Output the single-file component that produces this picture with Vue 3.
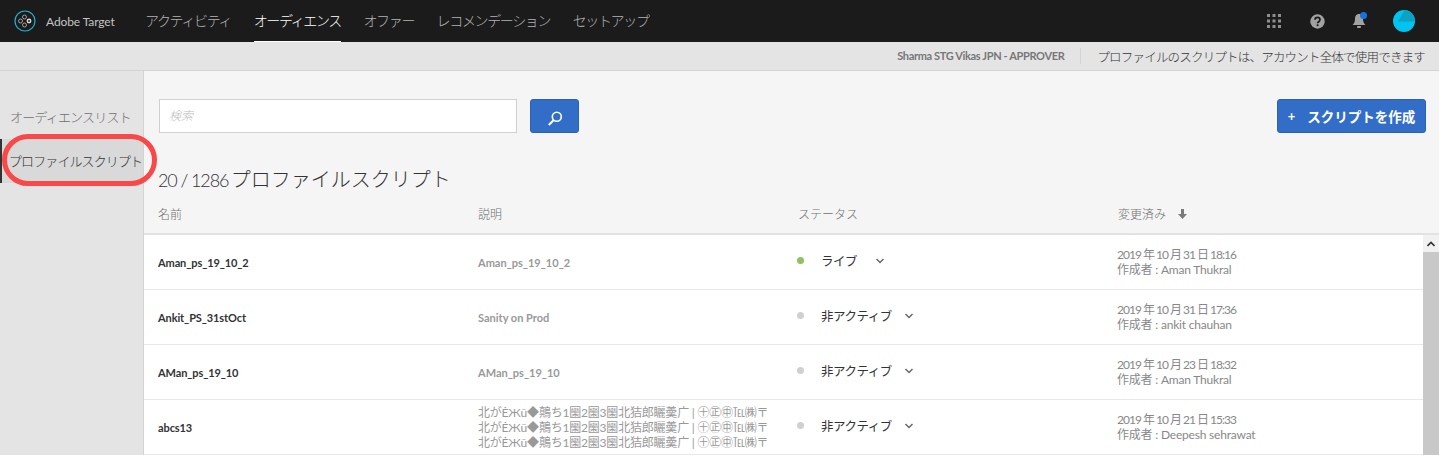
<script setup>
const nav = ['アクティビティ', 'オーディエンス', 'オファー', 'レコメンデーション', 'セットアップ']
const garbled = '北がĖЖū◆鷏ち1圞2圞3圞北狤郎矖羮广 | ㊉㊣㊥℡㈱〒'
const rows = [
  { name: 'Aman_ps_19_10_2', desc: ['Aman_ps_19_10_2'], status: 'ライブ', live: true, date: '2019 年 10 月 31 日 18:16', by: 'Aman Thukral' },
  { name: 'Ankit_PS_31stOct', desc: ['Sanity on Prod'], status: '非アクティブ', date: '2019 年 10 月 31 日 17:36', by: 'ankit chauhan' },
  { name: 'AMan_ps_19_10', desc: ['AMan_ps_19_10'], status: '非アクティブ', date: '2019 年 10 月 23 日 18:32', by: 'Aman Thukral' },
  { name: 'abcs13', desc: [garbled, garbled, garbled], status: '非アクティブ', date: '2019 年 10 月 21 日 15:33', by: 'Deepesh sehrawat' },
]
</script>

<template>
  <div class="page">
    <header class="topbar">
      <div class="brand">
        <svg width="22" height="22" viewBox="0 0 22 22" fill="none">
          <circle cx="11" cy="11" r="10" stroke="#1fb3d6" stroke-width="1.2" />
          <circle cx="6.5" cy="11" r="2" stroke="#bbb" stroke-width=".8" />
          <circle cx="10.5" cy="7" r="2" stroke="#bbb" stroke-width=".8" />
          <circle cx="10.5" cy="15" r="2" stroke="#bbb" stroke-width=".8" />
          <circle cx="15" cy="11" r="2.4" fill="#ddd" />
          <circle cx="15" cy="11" r="1" fill="#1b1b1b" />
        </svg>
        <span>Adobe Target</span>
      </div>
      <nav class="nav">
        <a v-for="(n, i) in nav" :key="n" :class="{ on: i === 1 }">{{ n }}</a>
      </nav>
      <div class="tools">
        <svg class="apps" width="14" height="14" viewBox="0 0 14 14" fill="#8e8e8e">
          <template v-for="y in [0, 5.5, 11]" :key="y">
            <rect v-for="x in [0, 5.5, 11]" :key="x" :x="x" :y="y" width="3" height="3" />
          </template>
        </svg>
        <svg class="help" width="15" height="15" viewBox="0 0 15 15">
          <circle cx="7.5" cy="7.5" r="7.2" fill="#a2a2a2" />
          <path d="M5 5.8c0-3.200 5-3.200 5 0 0 1.900-2.400 1.900-2.400 3.500" fill="none" stroke="#1b1b1b" stroke-width="1.700" />
          <rect x="6.700" y="10.300" width="1.800" height="1.800" fill="#1b1b1b" />
        </svg>
        <svg class="bell" width="15" height="18" viewBox="0 0 15 18">
          <path d="M7 2c-3 0-4 2.500-4 5 0 3-1 4.500-2.300 6h12.600C12 11.500 11 10 11 7c0-2.500-1-5-4-5z" fill="#a2a2a2" />
          <rect x="5.200" y="14" width="3.600" height="2" fill="#a2a2a2" />
          <circle cx="11.500" cy="3.500" r="3.500" fill="#1473e6" />
        </svg>
        <svg class="avatar" width="22" height="22" viewBox="0 0 22 22">
          <circle cx="11" cy="11" r="11" fill="#00c3f0" />
          <path d="M11.500 0L5 11.500H22A11 11 0 0 0 11.500 0z" fill="#0ba2c4" />
        </svg>
      </div>
    </header>

    <div class="subbar">
      <span class="user">Sharma STG Vikas JPN - APPROVER</span>
      <span class="note">プロファイルのスクリプトは、アカウント全体で使用できます</span>
    </div>

    <div class="body">
      <aside class="side">
        <a class="side-item">オーディエンスリスト</a>
        <a class="side-item active">プロファイルスクリプト</a>
      </aside>

      <main class="main">
        <div class="toolbar">
          <div class="search">検索</div>
          <button class="btn search-btn">
            <svg class="lens" width="16" height="16" viewBox="0 0 16 16" fill="none" stroke="#fff" stroke-width="1.600">
              <circle cx="9.800" cy="6.800" r="4.500" />
              <path d="M6.500 10.300L1.800 15" stroke-width="2" />
            </svg>
          </button>
          <button class="btn create"><span class="plus">+</span>スクリプトを作成</button>
        </div>
        <h1 class="count"><span class="num">20 / 1286</span> プロファイルスクリプト</h1>

        <div class="thead">
          <div>名前</div>
          <div>説明</div>
          <div>ステータス</div>
          <div>変更済み
            <svg class="sort" width="9" height="10" viewBox="0 0 9 10" fill="#7b7b7b"><path d="M3 0h3v5h3L4.500 10 0 5h3z" /></svg>
          </div>
        </div>

        <div class="tbody">
          <div class="rows">
            <div v-for="r in rows" :key="r.name" class="row">
              <div class="name">{{ r.name }}</div>
              <div class="desc" :class="{ multi: r.desc.length > 1 }">
                <div v-for="(d, i) in r.desc" :key="i">{{ d }}</div>
              </div>
              <div class="status" :class="{ live: r.live }">
                <i class="dot"></i>
                <span class="label">{{ r.status }}</span>
                <svg class="chev" width="8" height="6" viewBox="0 0 8 6" fill="none" stroke="#666" stroke-width="1.500"><path d="M.5 1L4 4.500 7.500 1" /></svg>
              </div>
              <div class="mod">
                <div class="date">{{ r.date }}</div>
                <div class="by">作成者 : {{ r.by }}</div>
              </div>
            </div>
          </div>
          <div class="scroll">
            <div class="scroll-btn">
              <svg width="8" height="6" viewBox="0 0 8 6" fill="none" stroke="#333" stroke-width="1.600"><path d="M.5 5L4 1.500 7.500 5" /></svg>
            </div>
            <div class="thumb"></div>
          </div>
        </div>
      </main>
    </div>

    <div class="callout"></div>
  </div>
</template>

<style>
html, body { margin: 0; overflow: hidden; }
</style>

<style scoped>
.page {
  position: relative;
  width: 1439px;
  height: 455px;
  overflow: hidden;
  display: flex;
  flex-direction: column;
  background: #f5f5f5;
  color: #333;
  font-family: "Lato", "Noto Sans CJK JP", sans-serif;
}
.topbar {
  height: 42px;
  flex: none;
  background: #1b1b1b;
  display: flex;
  align-items: center;
  padding-left: 14px;
}
.brand {
  display: flex;
  align-items: center;
  gap: 10px;
  width: 131px;
  color: #c4c4c4;
  font-size: 12px;
  letter-spacing: -.1px;
}
.nav { display: flex; gap: 22.500px; height: 42px; }
.nav a {
  line-height: 41px;
  font-size: 14px;
  font-weight: 300;
  letter-spacing: -1.350px;
  color: #b3b3b3;
}
.nav a.on { color: #fff; border-bottom: 1px solid #fff; height: 41px; }
.tools { margin-left: auto; position: relative; display: flex; align-items: center; padding-right: 24px; }
.apps { margin-right: 29px; }
.help { margin-right: 27px; }
.bell { margin-right: 26px; }
.subbar {
  height: 29px;
  flex: none;
  box-sizing: border-box;
  background: #e4e4e4;
  border-bottom: 1px solid #d3d3d3;
  display: flex;
  align-items: center;
  justify-content: flex-end;
  padding-right: 14px;
}
.user {
  font-size: 11px;
  font-weight: 700;
  letter-spacing: -.35px;
  color: #777;
  padding-right: 16px;
  border-right: 1px solid #d3d3d3;
  line-height: 16px;
}
.note { font-size: 12.500px; font-weight: 300; letter-spacing: -.8px; color: #333; padding-left: 16px; }
.body { flex: 1; display: flex; min-height: 0; }
.side {
  width: 144px;
  flex: none;
  box-sizing: border-box;
  background: #e4e4e4;
  border-right: 1px solid #d3d3d3;
  padding-top: 24px;
}
.side-item {
  display: block;
  height: 44px;
  line-height: 44px;
  padding-left: 10px;
  font-size: 13px;
  font-weight: 300;
  letter-spacing: -.8px;
  color: #707070;
  white-space: nowrap;
}
.side-item.active {
  background: #d9d9d9;
  border-left: 2px solid #333;
  padding-left: 7px;
  letter-spacing: -.9px;
  color: #333;
}
.main { flex: 1; min-width: 0; display: flex; flex-direction: column; }
.toolbar {
  display: flex;
  align-items: flex-start;
  padding: 28px 13px 0 15px;
}
.search {
  width: 358px;
  height: 34px;
  box-sizing: border-box;
  background: #fff;
  border: 1px solid #d0d0d0;
  padding-left: 9px;
  line-height: 32px;
  font-size: 12px;
  font-style: italic;
  font-weight: 300;
  color: #bbb;
}
.btn {
  background: #326ec8;
  border: 1px solid #2d62b3;
  border-radius: 3px;
  color: #fff;
  height: 34px;
  box-sizing: border-box;
  font: inherit;
  display: flex;
  align-items: center;
  justify-content: center;
  padding: 0;
}
.search-btn { width: 49px; margin-left: 13px; }
.lens { margin-top: 3px; }
.create {
  margin-left: auto;
  width: 149px;
  font-size: 13.500px;
  font-weight: 700;
}
.plus { margin-right: 12px; font-size: 13px; }
.count {
  margin: 31px 0 6px 14px;
  font-size: 20px;
  font-weight: 300;
  line-height: 30px;
  color: #333;
}
.num { font-size: 18px; letter-spacing: -1.100px; margin-right: -3px; }
.thead, .row {
  display: grid;
  grid-template-columns: 320px 320px 320px 1fr;
}
.thead {
  height: 34px;
  padding-left: 14px;
  box-sizing: border-box;
  border-bottom: 2px solid #e2e2e2;
  line-height: 28px;
  font-size: 12px;
  font-weight: 300;
  color: #707070;
}
.sort { margin-left: 9px; }
.tbody { display: flex; flex: 1; min-height: 0; }
.rows { flex: 1; min-width: 0; }
.row {
  height: 55px;
  box-sizing: border-box;
  padding-left: 14px;
  background: #fff;
  border-bottom: 1px solid #e8e8e8;
  align-items: center;
  font-size: 12px;
}
.name { font-weight: 700; color: #333; font-size: 11px; letter-spacing: -.1px; }
.desc { color: #999; font-weight: 700; font-size: 11px; }
.desc.multi { font-weight: 400; font-size: 12px; letter-spacing: -.2px; line-height: 15px; white-space: nowrap; }
.status { display: flex; align-items: center; margin-left: -1px; margin-top: -3px; }
.dot { width: 7px; height: 7px; border-radius: 50%; background: #d0d0d0; margin-right: 17px; }
.live .dot { background: #8cc25f; }
.label { font-size: 12.500px; font-weight: 400; letter-spacing: -.5px; color: #333; margin-right: 13px; }
.live .label { margin-right: 19px; }
.chev { margin-top: 1px; }
.mod {
  margin-left: -1px;
  font-size: 12px;
  line-height: 15px;
  color: #888;
  font-weight: 400;
}
.date { letter-spacing: -1px; }
.by { letter-spacing: -.2px; }
.scroll { width: 16px; flex: none; background: #f1f1f1; }
.scroll-btn { height: 17px; display: flex; align-items: center; justify-content: center; background: #f1f1f1; }
.thumb { height: 300px; background: #c8c8c8; }
.callout {
  position: absolute;
  left: 2px;
  top: 134px;
  width: 155px;
  height: 52px;
  box-sizing: border-box;
  border: 5px solid #f94848;
  border-radius: 26px;
  pointer-events: none;
}
</style>
